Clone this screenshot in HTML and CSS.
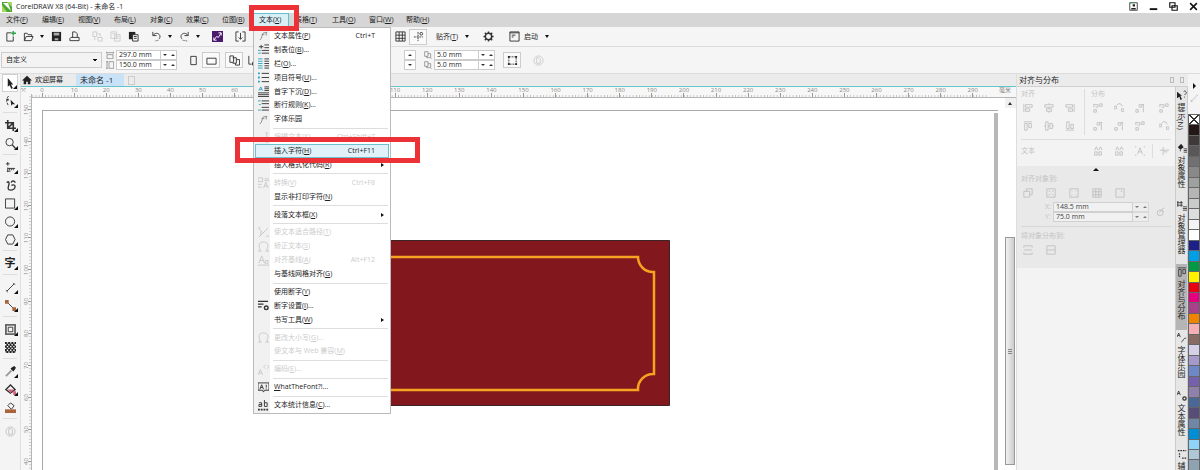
FILE: index.html
```html
<!DOCTYPE html>
<html lang="zh-CN">
<head>
<meta charset="utf-8">
<title>CorelDRAW X8 (64-Bit) - 未命名 -1</title>
<link rel="stylesheet" href="styles.css">
</head>
<body>
<svg class="defs" aria-hidden="true">
  <defs>
    <symbol id="new" viewBox="0 0 12 12"><path d="M7 2H2v9h7V6"/><path d="M9 0v5M7 2.500h5" class="green" stroke-width="1.500"/></symbol>
    <symbol id="open" viewBox="0 0 12 12"><path d="M1.500 10.500v-8h3l1 1.500h4v2M1.500 10.500l2-4.500h7.500l-2 4.500z"/></symbol>
    <symbol id="save" viewBox="0 0 12 12"><path d="M1 1h10v10H1z" class="solid"/><path d="M3 2h6v3H3zM4 8h4v2H4z" class="paper"/></symbol>
    <symbol id="print" viewBox="0 0 12 12"><path d="M4 7V1h3l2 2v4M2 7h9v3.500H1V8z"/></symbol>
    <symbol id="cut" viewBox="0 0 12 12"><path d="M1 1h4v5H1zM6 3h3v3M6 7h5v4H7zM3 7v3"/></symbol>
    <symbol id="copy" viewBox="0 0 12 12"><path d="M1 1h6v7H1zM5 4h6v7H5zM2.500 3h3M6.500 6h3M6.500 8h3"/></symbol>
    <symbol id="paste" viewBox="0 0 12 12"><path d="M1 1h7v8H1z" class="solid"/><path d="M5 4h6v7H5z" class="sheet"/><path d="M6.500 6h3M6.500 8h3"/></symbol>
    <symbol id="undo" viewBox="0 0 12 12"><path d="M2 1v4h4M2.500 4.500C6 0 12 4 9 8.500" /><path d="M8 10l-4 1" stroke-dasharray="1 1"/></symbol>
    <symbol id="redo" viewBox="0 0 12 12"><path d="M10 1v4H6M9.500 4.500C6 0 0 4 3 8.500"/><path d="M4 10l5 1" stroke-dasharray="1 1"/></symbol>
    <symbol id="connect" viewBox="0 0 12 12"><path d="M0 0h12v12H0z" class="purple"/><path d="M2 10l3-4 2 1 3-5M2 7v3h3M7 2h3v3" class="white-line"/></symbol>
    <symbol id="import" viewBox="0 0 12 12"><path d="M4 1H1v10h3M8 1h3v10H8M6 2v7M4 7l2 2 2-2"/></symbol>
    <symbol id="grid" viewBox="0 0 12 12"><path d="M1 1h10v10H1zM1 4.500h10M1 8h10M4.500 1v10M8 1v10"/></symbol>
    <symbol id="guides" viewBox="0 0 12 12"><path d="M5.500 1v10M1 6.500h10" stroke-dasharray="2 1"/><circle cx="9" cy="3" r="1.500"/></symbol>
    <symbol id="gear" viewBox="0 0 12 12"><circle cx="6" cy="6" r="3.500" stroke-width="1.600"/><path d="M6 .5v2M6 9.500v2M.5 6h2M9.500 6h2M2 2l1.500 1.500M8.500 8.500L10 10M10 2L8.500 3.500M3.500 8.500L2 10" stroke-width="1.600"/></symbol>
    <symbol id="launch" viewBox="0 0 12 12"><path d="M1 1h10v10H1zM1 2h10M3 4.500h4M3 6.500h2"/></symbol>
    <symbol id="portrait" viewBox="0 0 12 12"><path d="M3 1.500h6v9H3z"/></symbol>
    <symbol id="landscape" viewBox="0 0 12 12"><path d="M1 3.500h10v6.500H1z"/></symbol>
    <symbol id="pages" viewBox="0 0 12 12"><path d="M1 1h4v7H1zM4 3h4v6H4M8 5h3.500v6H7V9"/></symbol>
    <symbol id="page-one" viewBox="0 0 12 12"><path d="M2 1v9h3M6 8h3v3H6z"/></symbol>
    <symbol id="dup" viewBox="0 0 12 12"><path d="M1 1h5v7H1zM6 4h4v6H4V8M10 12h2"/></symbol>
    <symbol id="width" viewBox="0 0 12 12"><path d="M1 1v3M11 1v3M1 2.500h10M1.500 5.500h9v6h-9z"/></symbol>
    <symbol id="height" viewBox="0 0 12 12"><path d="M0 1h3M0 11h3M1.500 1v10M4.500 1h7v10h-7z"/></symbol>
    <symbol id="marquee" viewBox="0 0 12 12"><path d="M2 2h8v8H2z" stroke-dasharray="2 1"/><path d="M1 1h2v2H1zM9 1h2v2H9zM1 9h2v2H1zM9 9h2v2H9z" class="solid"/></symbol>
    <symbol id="round" viewBox="0 0 12 12"><circle cx="6" cy="6" r="5"/><path d="M4 3h3l1 1v5H4z"/></symbol>
    <symbol id="link" viewBox="0 0 12 12"><circle cx="5" cy="7" r="3.500"/><path d="M4 7l3-4 2 3M7 3l3-2"/></symbol>
    <symbol id="home" viewBox="0 0 12 12"><path d="M6 1l6 5.500h-2V11H7V8H5v3H2V6.500H0z" class="solid"/></symbol>
    <symbol id="pick" viewBox="0 0 12 12"><path d="M3 0l6 7H6.500l2 4-1.500 1-2-4L3 9.500z" class="solid"/></symbol>
    <symbol id="shape" viewBox="0 0 12 12"><path d="M4 0C1 3 1 6 4 11" stroke-dasharray="3 1"/><path d="M2 3h2v2H2zM6 4l5 5H8l-1 2z" class="solid"/></symbol>
    <symbol id="crop" viewBox="0 0 12 12"><path d="M3 0v9h9M0 3h9v9M3 9l6-6" stroke-width="1.800"/></symbol>
    <symbol id="zoom" viewBox="0 0 12 12"><circle cx="5" cy="4.500" r="4"/><path d="M8 7.500l3.500 4" stroke-width="1.500"/></symbol>
    <symbol id="freehand" viewBox="0 0 12 12"><path d="M3 0v4M1 2h4M3 6v5M3 7h8M5 7v2M7 7v2M9 7v2M2 10h4"/></symbol>
    <symbol id="artistic" viewBox="0 0 12 12"><path d="M2 3c2-3 3 0 2 3s-1 5 2 5 5-2 5-4-3-2-4-1M7 3c0-3 4-2 4 0" stroke-width="1.500"/></symbol>
    <symbol id="rect" viewBox="0 0 12 12"><path d="M.5 1h10v10H.5z"/></symbol>
    <symbol id="ellipse" viewBox="0 0 12 12"><circle cx="5.500" cy="6" r="5"/></symbol>
    <symbol id="polygon" viewBox="0 0 12 12"><path d="M3 1h5.500L11 6l-2.500 5H3L.5 6z"/></symbol>
    <symbol id="line" viewBox="0 0 12 12"><path d="M2 10l8-8M1 9l2 2M9 1l2 2"/></symbol>
    <symbol id="connector" viewBox="0 0 12 12"><path d="M2 2l8 8"/><path d="M0 0h4v4H0zM8 8h4v4H8z" class="brown"/></symbol>
    <symbol id="contour" viewBox="0 0 12 12"><path d="M1 1h10v10H1z" stroke="#666" stroke-width="2"/><path d="M3.500 3.500h5v5h-5z"/></symbol>
    <symbol id="checker" viewBox="0 0 12 12"><path d="M0 0h12v12H0z" class="solid"/><path d="M2 1h10M0 3h12M2 5h10M0 7h12M2 9h10M0 11h12" class="white-line" stroke-width="1.500" stroke-dasharray="1.500 2"/></symbol>
    <symbol id="dropper" viewBox="0 0 12 12"><path d="M1 11l6-6" stroke-width="2" stroke="#999"/><path d="M7 2l3-2 2 2-2 3-1 1-3-3z" class="solid"/></symbol>
    <symbol id="fill" viewBox="0 0 12 12"><path d="M1 6l5-5 5 5-5 4z" stroke-width="1.500"/><path d="M3 6h7l-4 4zM9 8h3v4H9z" class="rose"/></symbol>
    <symbol id="bucket" viewBox="0 0 12 12"><path d="M3 4l3-3 4 3-3 4z"/><path d="M0 8h12v4H0z" class="brown"/></symbol>
    <symbol id="font-p" viewBox="0 0 12 12"><path d="M2 11C5 9 4 4 6 3h4M4 5h3M9 2v4" stroke="#888"/></symbol>
    <symbol id="tabs" viewBox="0 0 12 12"><path d="M1 3h5M3.500 1v4M7 1h5M7 4h5M4 7h8M4 10h8"/><path d="M0 7h3M0 10h3" class="blue"/></symbol>
    <symbol id="columns" viewBox="0 0 12 12"><path d="M0 1h5M0 3.500h5M0 6h5M0 8.500h5M0 11h5" class="blue"/><path d="M7 1h5M7 3.500h5M7 6h5M7 8.500h5M7 11h5"/></symbol>
    <symbol id="bullets" viewBox="0 0 12 12"><path d="M0 1.500h2M0 6h2M0 10.500h2" class="blue" stroke-width="2"/><path d="M4 1.500h8M4 6h8M4 10.500h8"/></symbol>
    <symbol id="dropcap" viewBox="0 0 12 12"><path d="M1 5l2-4 2 4M2 4h2" class="blue"/><path d="M7 1h5M7 3h5M7 5h5M0 7.500h12M0 9.500h12M0 11.500h12"/></symbol>
    <symbol id="breaks" viewBox="0 0 12 12"><path d="M0 1h3M1 5h2M0 11h3" class="blue"/><path d="M4 1h8M4 4h8M4 8h8M4 11h8"/></symbol>
    <symbol id="edit" viewBox="0 0 12 12"><path d="M0 9h6M1 6h3M8 1h3M9.500 1v10M8 11h3"/></symbol>
    <symbol id="convert" viewBox="0 0 12 12"><path d="M0 1h5v4H0zM7 2h5M7 4h5M0 8h4M0 11h4M6 12l2.500-6L11 12M7 10h3"/></symbol>
    <symbol id="path" viewBox="0 0 12 12"><path d="M1 11L11 1M1 2l4 4M0 1h3M9 10h3M3 5v4"/></symbol>
    <symbol id="straight" viewBox="0 0 12 12"><path d="M2 8C-1 2 4 1 6 1s7 1 4 7M0 11h4M8 11h4M2 8v3M10 8v3"/></symbol>
    <symbol id="baseline" viewBox="0 0 12 12"><path d="M1 9l3-8 3 8M2 6h4M8 6h3v3H8zM0 11h12"/></symbol>
    <symbol id="hyphen" viewBox="0 0 12 12"><path d="M0 1.500h11M0 4.500h6M0 7.500h4" stroke-width="1.500"/><circle cx="9" cy="8.500" r="2" stroke-width="1.500"/></symbol>
    <symbol id="code" viewBox="0 0 12 12"><path d="M0 12l2.500-6L5 12M1 10h3M6 3l2-2M6 3l2 2M12 3l-2-2M12 3l-2 2"/></symbol>
    <symbol id="wtf" viewBox="0 0 12 12"><path d="M0 1h12v8H7l-1 2-1-2H0zM2 8l2-5 2 5M3 6h2M9 3v3M9 7v1"/></symbol>
    <symbol id="stats" viewBox="0 0 12 12"><path d="M1 3h3v4H1V5h3M7 0v7h3V3H7"/><path d="M0 10.500h12" stroke-dasharray="2 1" stroke-width="2"/></symbol>
    <symbol id="al" viewBox="0 0 12 12"><path d="M1 1v10M3 2h8v3H3zM3 7h5v3H3z"/></symbol>
    <symbol id="ac" viewBox="0 0 12 12"><path d="M1 2h10v3H1zM3 7h6v3H3zM6 0v2M6 5v2M6 10v2"/></symbol>
    <symbol id="ar" viewBox="0 0 12 12"><path d="M11 1v10M1 2h8v3H1zM4 7h5v3H4z"/></symbol>
    <symbol id="at" viewBox="0 0 12 12"><path d="M1 1h10M2 3h3v8H2zM7 3h3v5H7z"/></symbol>
    <symbol id="am" viewBox="0 0 12 12"><path d="M2 1h3v10H2zM7 3h3v6H7zM0 6h2M5 6h2M10 6h2"/></symbol>
    <symbol id="ab" viewBox="0 0 12 12"><path d="M1 11h10M2 1h3v8H2zM7 4h3v5H7z"/></symbol>
    <symbol id="d1" viewBox="0 0 12 12"><path d="M1 1v4M1 2h5v3H3M8 1h3v3H8zM1 8h3v3H1z"/></symbol>
    <symbol id="d2" viewBox="0 0 12 12"><path d="M0 4h3v3H0zM5 1h3M9 7h3v3H9zM3 3l2-2M8 1l2 3"/></symbol>
    <symbol id="d3" viewBox="0 0 12 12"><path d="M5 2h3v3H5zM10 1v10M1 8h3v3H1zM8 2h3"/></symbol>
    <symbol id="text-al" viewBox="0 0 12 12"><path d="M2 5l2-4 2 4M7 5l2-4 2 4M2 7h3v4H2zM7 7h3v4H7z"/></symbol>
    <symbol id="text-box" viewBox="0 0 12 12"><path d="M3 10l3-8 3 8M4 7h4M0 2V0h2M10 0h2v2M0 10v2h2M10 12h2v-2"/></symbol>
    <symbol id="origin" viewBox="0 0 12 12"><path d="M1 5h11M5 1v10M6 7h4"/></symbol>
    <symbol id="active" viewBox="0 0 12 12"><path d="M1 4h7v7H1zM4 4V1h7v7H8"/></symbol>
    <symbol id="edge" viewBox="0 0 12 12"><path d="M1 1h10v10H1z"/><path d="M3 3l2 2M9 3L7 5M3 9l2-2M9 9L7 7"/></symbol>
    <symbol id="center" viewBox="0 0 12 12"><path d="M1 1h10v10H1zM3 3l1 1M9 3L8 4M3 9l1-1M9 9L8 8"/></symbol>
    <symbol id="point" viewBox="0 0 12 12"><path d="M1 1h10v10H1zM7 4h2"/></symbol>
    <symbol id="page-h" viewBox="0 0 12 12"><path d="M1 1h10M1 6h10M1 1v2M11 1v2M1 9v2h10V9"/></symbol>
    <symbol id="page-f" viewBox="0 0 12 12"><path d="M1 1h10v10H1zM1 6h10"/></symbol>
    <symbol id="user" viewBox="0 0 12 12"><path d="M1 1h10v10H1z"/><path d="M5 3h3v3H5zM3 8h6v2H3z" class="solid"/><path d="M1 1h5" class="green"/></symbol>
    <symbol id="min" viewBox="0 0 12 12"><path d="M1 9.500h10" stroke-width="2.500"/></symbol>
    <symbol id="restore" viewBox="0 0 12 12"><path d="M1 1h7v6H1zM4 5h7v6H4z" stroke-width="1.500"/></symbol>
    <symbol id="close" viewBox="0 0 12 12"><path d="M1.500 1.500l9 9M10.500 1.500l-9 9" stroke-width="2"/></symbol>
    <symbol id="hint" viewBox="0 0 12 12"><path d="M0 2l6 5H4l2 4-2 1-1-4-3 2z" class="solid"/><path d="M8 2c1-2 4 0 3 2L9 6M9 8v1"/></symbol>
    <symbol id="props" viewBox="0 0 12 12"><path d="M1 5l4-4 3 4-4 3z" class="solid"/><path d="M8 7h4M8 9h4M8 11h4M4 8v2"/></symbol>
    <symbol id="manager" viewBox="0 0 12 12"><path d="M1 0v7M5 0v7M0 2h7M0 5h7" /><path d="M7 7h5M7 9h5M7 11h5"/></symbol>
    <symbol id="fontset" viewBox="0 0 12 12"><path d="M0 5l2-5 2 5M1 3h2M5 11c3-1 2-5 6-5"/></symbol>
    <symbol id="textset" viewBox="0 0 12 12"><path d="M0 5l2-5 2 5M1 3h2"/><circle cx="9" cy="9" r="2" stroke-width="1.500"/></symbol>
    <symbol id="guideset" viewBox="0 0 12 12"><path d="M1 2h10M3 5v6M6 11h6" stroke-dasharray="2 1" stroke-width="1.500"/></symbol>
    <symbol id="pen" viewBox="0 0 12 12"><path d="M1 11l8-8M9 1l2 2M1 9v2h2"/></symbol>
  </defs>
</svg>

<div class="app">
  <header class="titlebar">
    <svg class="logo" viewBox="0 0 10 10"><path d="M0 0h10v10H0z" fill="#4ba82e"/><path d="M0 3l5 7H0zM5 0h5v5z" fill="#a8d56a"/><path d="M1 1l8 8-3-8z" fill="#fff"/></svg>
    <h1 class="title">CorelDRAW X8 (64-Bit) - 未命名 -1</h1>
    <div class="window-buttons">
      <button class="win" aria-label="账户"><svg class="i"><use href="#user"/></svg></button>
      <button class="win" aria-label="最小化"><svg class="i"><use href="#min"/></svg></button>
      <button class="win" aria-label="还原"><svg class="i"><use href="#restore"/></svg></button>
      <button class="win" aria-label="关闭"><svg class="i"><use href="#close"/></svg></button>
    </div>
  </header>

  <nav class="menubar">
    <button class="menu">文件(<u>F</u>)</button>
    <button class="menu">编辑(<u>E</u>)</button>
    <button class="menu">视图(<u>V</u>)</button>
    <button class="menu">布局(<u>L</u>)</button>
    <button class="menu">对象(<u>C</u>)</button>
    <button class="menu">效果(<u>C</u>)</button>
    <button class="menu">位图(<u>B</u>)</button>
    <div class="menu-open">
      <button class="menu menu-active" aria-expanded="true">文本(<u>X</u>)</button>
      <ul class="dropdown">
        <li class="row"><button class="item"><svg class="i"><use href="#font-p"/></svg><span>文本属性(<u>P</u>)</span><kbd>Ctrl+T</kbd></button></li>
        <li class="row"><button class="item"><svg class="i"><use href="#tabs"/></svg><span>制表位(<u>B</u>)...</span></button></li>
        <li class="row"><button class="item"><svg class="i"><use href="#columns"/></svg><span>栏(<u>O</u>)...</span></button></li>
        <li class="row"><button class="item"><svg class="i"><use href="#bullets"/></svg><span>项目符号(<u>U</u>)...</span></button></li>
        <li class="row"><button class="item"><svg class="i"><use href="#dropcap"/></svg><span>首字下沉(<u>D</u>)...</span></button></li>
        <li class="row"><button class="item"><svg class="i"><use href="#breaks"/></svg><span>断行规则(<u>K</u>)...</span></button></li>
        <li class="row"><button class="item"><svg class="i"><use href="#font-p"/></svg><span>字体乐园</span></button></li>
        <li class="rule"></li>
        <li class="row"><button class="item" disabled><svg class="i"><use href="#edit"/></svg><span>编辑文本(<u>X</u>)...</span><kbd>Ctrl+Shift+T</kbd></button></li>
        <li class="row"><button class="item item-hot"><span>插入字符(<u>H</u>)</span><kbd>Ctrl+F11</kbd></button></li>
        <li class="row"><button class="item item-sub"><span>插入格式化代码(<u>R</u>)</span></button></li>
        <li class="rule"></li>
        <li class="row"><button class="item" disabled><svg class="i"><use href="#convert"/></svg><span>转换(<u>V</u>)</span><kbd>Ctrl+F8</kbd></button></li>
        <li class="row"><button class="item"><span>显示非打印字符(<u>N</u>)</span></button></li>
        <li class="rule"></li>
        <li class="row"><button class="item item-sub"><span>段落文本框(<u>X</u>)</span></button></li>
        <li class="rule"></li>
        <li class="row"><button class="item" disabled><svg class="i"><use href="#path"/></svg><span>使文本适合路径(<u>T</u>)</span></button></li>
        <li class="row"><button class="item" disabled><svg class="i"><use href="#straight"/></svg><span>矫正文本(<u>S</u>)</span></button></li>
        <li class="row"><button class="item" disabled><svg class="i"><use href="#baseline"/></svg><span>对齐基线(<u>A</u>)</span><kbd>Alt+F12</kbd></button></li>
        <li class="row"><button class="item"><span>与基线网格对齐(<u>G</u>)</span></button></li>
        <li class="rule"></li>
        <li class="row"><button class="item"><span>使用断字(<u>Y</u>)</span></button></li>
        <li class="row"><button class="item"><svg class="i"><use href="#hyphen"/></svg><span>断字设置(<u>I</u>)...</span></button></li>
        <li class="row"><button class="item item-sub"><span>书写工具(<u>W</u>)</span></button></li>
        <li class="rule"></li>
        <li class="row"><button class="item" disabled><svg class="i"><use href="#straight"/></svg><span>更改大小写(<u>G</u>)...</span></button></li>
        <li class="row"><button class="item" disabled><span>使文本与 Web 兼容(<u>M</u>)</span></button></li>
        <li class="rule"></li>
        <li class="row"><button class="item" disabled><svg class="i"><use href="#code"/></svg><span>编码(<u>E</u>)...</span></button></li>
        <li class="rule"></li>
        <li class="row"><button class="item"><svg class="i"><use href="#wtf"/></svg><span><u>W</u>hatTheFont?!...</span></button></li>
        <li class="rule"></li>
        <li class="row"><button class="item"><svg class="i"><use href="#stats"/></svg><span>文本统计信息(<u>C</u>)...</span></button></li>
      </ul>
    </div>
    <button class="menu menu-wide">表格(<u>T</u>)</button>
    <button class="menu menu-wide">工具(<u>O</u>)</button>
    <button class="menu menu-wide">窗口(<u>W</u>)</button>
    <button class="menu menu-wide">帮助(<u>H</u>)</button>
  </nav>

  <div class="toolbar">
    <div class="group">
      <button class="tool" aria-label="新建"><svg class="i"><use href="#new"/></svg></button>
      <button class="tool" aria-label="打开"><svg class="i"><use href="#open"/></svg></button>
      <button class="caret" aria-label="最近文件"></button>
      <button class="tool" aria-label="保存"><svg class="i"><use href="#save"/></svg></button>
      <button class="tool" aria-label="打印"><svg class="i"><use href="#print"/></svg></button>
    </div>
    <div class="group">
      <button class="tool" aria-label="剪切" disabled><svg class="i"><use href="#cut"/></svg></button>
      <button class="tool" aria-label="复制" disabled><svg class="i"><use href="#copy"/></svg></button>
      <button class="tool" aria-label="粘贴"><svg class="i"><use href="#paste"/></svg></button>
    </div>
    <div class="group">
      <button class="tool" aria-label="撤消"><svg class="i"><use href="#undo"/></svg></button>
      <button class="caret" aria-label="撤消列表"></button>
      <button class="tool" aria-label="重做"><svg class="i"><use href="#redo"/></svg></button>
      <button class="caret" aria-label="重做列表"></button>
    </div>
    <div class="group">
      <button class="tool" aria-label="搜索内容"><svg class="i"><use href="#connect"/></svg></button>
    </div>
    <div class="group group-view">
      <button class="tool" aria-label="导入"><svg class="i"><use href="#import"/></svg></button>
    </div>
    <div class="group">
      <button class="tool" aria-label="网格"><svg class="i"><use href="#grid"/></svg></button>
      <button class="tool tool-on" aria-label="辅助线"><svg class="i"><use href="#guides"/></svg></button>
    </div>
    <div class="group">
      <button class="text-tool">贴齐(<u>T</u>)</button>
      <button class="caret" aria-label="贴齐选项"></button>
    </div>
    <div class="group group-gear">
      <button class="tool" aria-label="选项"><svg class="i"><use href="#gear"/></svg></button>
    </div>
    <div class="group">
      <button class="tool" aria-label="应用程序启动器"><svg class="i"><use href="#launch"/></svg></button>
      <button class="text-tool text-launch">启动</button>
      <button class="caret" aria-label="启动列表"></button>
    </div>
  </div>

  <div class="toolbar propbar">
    <select class="preset" aria-label="页面大小"><option>自定义</option></select>
    <div class="fields">
      <label class="field"><svg class="i mini"><use href="#width"/></svg><input class="num" value="297.0 mm" aria-label="页面宽度"><button class="step" aria-label="减小"></button><button class="step step-up" aria-label="增大"></button></label>
      <label class="field"><svg class="i mini"><use href="#height"/></svg><input class="num" value="150.0 mm" aria-label="页面高度"><button class="step" aria-label="减小"></button><button class="step step-up" aria-label="增大"></button></label>
    </div>
    <div class="group group-page">
      <button class="tool" aria-label="纵向"><svg class="i"><use href="#portrait"/></svg></button>
      <button class="tool tool-on" aria-label="横向"><svg class="i"><use href="#landscape"/></svg></button>
    </div>
    <div class="group group-pages">
      <button class="tool tool-on" aria-label="所有页面"><svg class="i"><use href="#pages"/></svg></button>
      <button class="tool" aria-label="当前页"><svg class="i"><use href="#page-one"/></svg></button>
    </div>
    <div class="nudge"><button class="step step-up" aria-label="增大微调"></button><button class="step" aria-label="减小微调"></button></div>
    <div class="fields fields-dup">
      <label class="field"><svg class="i mini"><use href="#dup"/></svg><input class="num" value="5.0 mm" aria-label="再制 X"><button class="step" aria-label="减小"></button><button class="step step-up" aria-label="增大"></button></label>
      <label class="field"><svg class="i mini"><use href="#dup"/></svg><input class="num" value="5.0 mm" aria-label="再制 Y"><button class="step" aria-label="减小"></button><button class="step step-up" aria-label="增大"></button></label>
    </div>
    <div class="group group-end">
      <button class="tool tool-on" aria-label="视为已填充"><svg class="i"><use href="#marquee"/></svg></button>
      <button class="tool" aria-label="快速自定义" disabled><svg class="i"><use href="#round"/></svg></button>
    </div>
  </div>

  <div class="body">
    <aside class="toolbox">
      <button class="pen pen-on" aria-label="选择"><svg class="i"><use href="#pick"/></svg></button>
      <button class="pen" aria-label="形状"><svg class="i"><use href="#shape"/></svg></button>
      <hr class="split">
      <button class="pen" aria-label="裁剪"><svg class="i"><use href="#crop"/></svg></button>
      <button class="pen" aria-label="缩放"><svg class="i"><use href="#zoom"/></svg></button>
      <hr class="split">
      <button class="pen" aria-label="手绘"><svg class="i"><use href="#freehand"/></svg></button>
      <button class="pen pen-flat" aria-label="艺术笔"><svg class="i"><use href="#artistic"/></svg></button>
      <button class="pen" aria-label="矩形"><svg class="i"><use href="#rect"/></svg></button>
      <button class="pen" aria-label="椭圆形"><svg class="i"><use href="#ellipse"/></svg></button>
      <button class="pen" aria-label="多边形"><svg class="i"><use href="#polygon"/></svg></button>
      <hr class="split">
      <button class="pen pen-text">字</button>
      <hr class="split">
      <button class="pen" aria-label="平行度量"><svg class="i"><use href="#line"/></svg></button>
      <button class="pen" aria-label="连接器"><svg class="i"><use href="#connector"/></svg></button>
      <hr class="split">
      <button class="pen" aria-label="轮廓图"><svg class="i"><use href="#contour"/></svg></button>
      <button class="pen pen-flat" aria-label="透明度"><svg class="i"><use href="#checker"/></svg></button>
      <hr class="split">
      <button class="pen" aria-label="滴管"><svg class="i"><use href="#dropper"/></svg></button>
      <button class="pen" aria-label="交互式填充"><svg class="i"><use href="#fill"/></svg></button>
      <button class="pen pen-flat" aria-label="智能填充"><svg class="i"><use href="#bucket"/></svg></button>
      <hr class="split">
      <button class="pen pen-flat" aria-label="快速自定义" disabled><svg class="i"><use href="#round"/></svg></button>
    </aside>

    <main class="workspace">
      <div class="tabs">
        <button class="tab"><svg class="i"><use href="#home"/></svg>欢迎屏幕</button>
        <button class="tab tab-on">未命名 -1</button>
        <button class="tab-new" aria-label="新建文档"></button>
      </div>
      <div class="ruler">
        <span class="corner">⤧</span>
        <ol class="marks">
          <li>0</li><li>10</li><li>20</li><li>30</li><li>40</li><li>50</li><li>60</li><li>70</li><li>80</li><li>90</li><li>100</li><li>110</li><li>120</li><li>130</li><li>140</li><li>150</li><li>160</li><li>170</li><li>180</li><li>190</li><li>200</li><li>210</li><li>220</li><li>230</li><li>240</li><li>250</li><li>260</li><li>270</li><li>280</li><li>290</li>
        </ol>
        <span class="unit">毫米</span>
      </div>
      <div class="stage">
        <ol class="vmarks">
          <li>150</li><li>140</li><li>130</li><li>120</li><li>110</li><li>100</li><li>90</li><li>80</li><li>70</li><li>60</li><li>50</li><li>40</li>
        </ol>
        <div class="canvas">
          <div class="sheet-page">
            <svg class="art" viewBox="0 0 334 166"><path d="M.5.5h333v165H.5z" fill="#82181d" stroke="#3a2426"/><path d="M32 17H302A15 15 0 0 0 318 32V134A15 15 0 0 0 302 150H32A15 15 0 0 0 16 134V32A15 15 0 0 0 32 17z" fill="none" stroke="#f5a321" stroke-width="2.500"/></svg>
          </div>
        </div>
        <div class="scroll">
          <button class="scroll-up" aria-label="向上滚动"></button>
          <div class="thumb"></div>
        </div>
      </div>
    </main>

    <div class="side">
      <header class="side-head"><h2 class="side-title">对齐与分布</h2><button class="sq" aria-label="折叠"></button><button class="sq" aria-label="关闭泊坞窗"></button></header>
      <div class="side-body">
        <section class="docker">
          <div class="pair">
            <div class="cell">
              <h3 class="cap">对齐</h3>
              <div class="icons"><svg class="i"><use href="#al"/></svg><svg class="i"><use href="#ac"/></svg><svg class="i"><use href="#ar"/></svg></div>
              <div class="icons"><svg class="i"><use href="#at"/></svg><svg class="i"><use href="#am"/></svg><svg class="i"><use href="#ab"/></svg></div>
            </div>
            <div class="cell cell-wide">
              <h3 class="cap">分布</h3>
              <div class="icons"><svg class="i"><use href="#d1"/></svg><svg class="i"><use href="#d2"/></svg><svg class="i"><use href="#d3"/></svg><svg class="i last"><use href="#d1"/></svg></div>
              <div class="icons"><svg class="i"><use href="#d3"/></svg><svg class="i"><use href="#d3"/></svg><svg class="i"><use href="#d1"/></svg><svg class="i last"><use href="#d2"/></svg></div>
            </div>
          </div>
          <div class="pair pair-text">
            <h3 class="cap cell">文本</h3>
            <div class="icons cell-wide"><svg class="i"><use href="#text-al"/></svg><svg class="i"><use href="#text-al"/></svg><svg class="i"><use href="#text-box"/></svg><span class="bar"></span><svg class="i last"><use href="#origin"/></svg></div>
          </div>
          <div class="more">
            <button class="fold" aria-label="收起"></button>
            <h3 class="cap">对齐对象到:</h3>
            <div class="icons targets"><svg class="i"><use href="#active"/></svg><svg class="i"><use href="#edge"/></svg><svg class="i"><use href="#center"/></svg><svg class="i"><use href="#grid"/></svg><svg class="i"><use href="#point"/></svg></div>
            <div class="coords">
              <div class="fields fields-xy">
                <label class="field"><span class="axis">X:</span><input class="num" value="148.5 mm"><button class="step" aria-label="减小"></button><button class="step step-up" aria-label="增大"></button></label>
                <label class="field"><span class="axis">Y:</span><input class="num" value="75.0 mm"><button class="step" aria-label="减小"></button><button class="step step-up" aria-label="增大"></button></label>
              </div>
              <svg class="i"><use href="#link"/></svg>
            </div>
            <h3 class="cap cap-line">将对象分布到:</h3>
            <div class="icons targets"><svg class="i"><use href="#page-h"/></svg><svg class="i"><use href="#page-f"/></svg></div>
          </div>
        </section>
        <nav class="docks">
          <button class="dock"><svg class="i"><use href="#hint"/></svg>提示(N)</button>
          <button class="dock"><svg class="i"><use href="#props"/></svg>对象属性</button>
          <button class="dock"><svg class="i"><use href="#manager"/></svg>对象管理器</button>
          <button class="dock dock-on"><svg class="i"><use href="#at"/></svg>对齐与分布</button>
          <button class="dock"><svg class="i"><use href="#fontset"/></svg>字体乐园</button>
          <button class="dock"><svg class="i"><use href="#textset"/></svg>文本属性</button>
          <button class="dock"><svg class="i"><use href="#guideset"/></svg>辅助</button>
        </nav>
      </div>
    </div>

    <div class="palette">
      <button class="flyout" aria-label="调色板选项"></button>
      <svg class="i picker"><use href="#pen"/></svg>
      <div class="swatches">
        <i class="sw sw-none"></i><i class="sw" style="background:#231815"></i><i class="sw" style="background:#3e3a39"></i><i class="sw" style="background:#595757"></i><i class="sw" style="background:#727171"></i><i class="sw" style="background:#898989"></i><i class="sw" style="background:#9fa0a0"></i><i class="sw" style="background:#b5b5b6"></i><i class="sw" style="background:#c9caca"></i><i class="sw" style="background:#dcdddd"></i><i class="sw" style="background:#f4f4f4"></i><i class="sw" style="background:#fff"></i><i class="sw" style="background:#1d2088"></i><i class="sw" style="background:#00a0e9"></i><i class="sw" style="background:#009944"></i><i class="sw" style="background:#fff100"></i><i class="sw" style="background:#e60012"></i><i class="sw" style="background:#e4007f"></i><i class="sw" style="background:#a9408c"></i><i class="sw" style="background:#f08300"></i><i class="sw" style="background:#f4b0b2"></i><i class="sw" style="background:#886c64"></i><i class="sw" style="background:#d5cfe8"></i><i class="sw" style="background:#a59aca"></i><i class="sw" style="background:#6d87c8"></i><i class="sw" style="background:#7560ae"></i><i class="sw" style="background:#8f80ac"></i><i class="sw" style="background:#4a679a"></i><i class="sw" style="background:#574d78"></i><i class="sw" style="background:#7086a6"></i><i class="sw" style="background:#008fd6"></i><i class="sw" style="background:#8fd4f8"></i><i class="sw" style="background:#b0c8d6"></i><i class="sw" style="background:#8fa2b2"></i>
      </div>
    </div>
  </div>

  <div class="callout callout-menu"></div>
  <div class="callout callout-item"></div>
</div>
</body>
</html>
```

FILE: styles.css
```css
* { box-sizing: border-box; }

body {
  margin: 0;
  font: 7px/10px "Open Sans", "Noto Sans CJK SC", sans-serif;
  color: #222;
  background: #f4f4f4;
}

button, input, select {
  margin: 0;
  padding: 0;
  border: 0;
  border-radius: 0;
  background: none;
  color: inherit;
  font: inherit;
  text-align: left;
  appearance: none;
}

h1, h2, h3 { margin: 0; font-size: inherit; font-weight: 400; }
ul, ol { margin: 0; padding: 0; list-style: none; }
kbd { font: inherit; }
u { text-underline-offset: 1px; }

.defs { position: absolute; width: 0; height: 0; }

.i {
  flex: none;
  display: block;
  width: 11px;
  height: 11px;
  fill: none;
  stroke: #333;
  stroke-width: 1;
}
.mini { width: 8px; height: 8px; stroke: #777; }
.solid { fill: #222; stroke: none; }
.paper { fill: #aaa; stroke: none; }
.sheet { fill: #f4f4f4; }
.purple { fill: #4c1a6c; stroke: none; }
.brown { fill: #a8643c; stroke: none; }
.rose { fill: #d0607c; stroke: none; }
.green { stroke: #27a844; }
.blue { stroke: #27a3c4; }
.white-line { stroke: #fff; }

.app {
  position: relative;
  display: flex;
  flex-direction: column;
  height: 100vh;
  overflow: hidden;
}

/* Title bar */
.titlebar {
  flex: none;
  display: flex;
  align-items: center;
  gap: 4px;
  height: 13px;
  padding: 0 2px;
  background: #fff;
}
.logo { width: 10px; height: 10px; }
.title { flex: 1; white-space: nowrap; }
.window-buttons { display: flex; align-items: center; gap: 11px; }
.win { width: 9px; }
.win .i { width: 9px; height: 9px; stroke: #111; }

/* Menu bar */
.menubar {
  flex: none;
  display: flex;
  height: 14px;
  padding-left: 1px;
  background: #d6d6d6;
}
.menu { width: 36px; height: 14px; padding: 0 5px; white-space: nowrap; }
.menu-wide { width: 37px; padding: 0 6px; }
.menu-open { position: relative; z-index: 2; }
.menu-active {
  padding: 0 5px;
  border: 1px solid #63bfd0;
  background: #d8eff6;
}
.dropdown {
  position: absolute;
  top: 14px;
  left: 0;
  display: flex;
  flex-direction: column;
  width: 138px;
  height: 387px;
  padding: 1px;
  border: 1px solid #bbb;
  background: linear-gradient(90deg, #f1f1f1 16px, #fff 16px);
}
.row { flex: 0 1 14px; min-height: 0; display: flex; }
.item {
  flex: 1;
  display: grid;
  grid-template-columns: 12px 1fr auto;
  align-items: center;
  column-gap: 4px;
  padding: 0 13px 0 2px;
  border: 1px solid transparent;
  line-height: 10px;
  white-space: nowrap;
}
.item span { grid-column: 2; grid-row: 1; }
.item kbd { grid-column: 3; grid-row: 1; }
.item .i { grid-column: 1; grid-row: 1; }
.item:disabled { color: #ccc; }
.item:disabled .i { stroke: #c8c8c8; }
.item-hot { border-color: #6cc0cf; background: #e0f1f9; }
.item-sub { padding-right: 4px; }
.item-sub::after {
  content: "";
  grid-column: 3;
  border: 2px solid transparent;
  border-left: 3px solid #111;
  border-right: 0;
}
.rule {
  flex: 0 1 4px;
  margin: 0 1px 0 18px;
  background: linear-gradient(#ddd, #ddd) 0 50% / 100% 1px no-repeat;
}

/* Toolbars */
.toolbar {
  flex: none;
  display: flex;
  align-items: center;
  gap: 5px;
  height: 20px;
  padding-left: 1px;
  border-bottom: 1px solid #dcdcdc;
  background: #f5f5f5;
}
.group { display: flex; align-items: center; }
.tool {
  display: grid;
  place-items: center;
  width: 18px;
  height: 16px;
}
.tool:disabled .i { stroke: #ccc; }
.tool-on { border: 1px solid #ccc; background: #fafafa; }
.caret { display: grid; place-items: center; width: 10px; height: 10px; }
.caret::before {
  content: "";
  border: 2px solid transparent;
  border-top: 3px solid #111;
  border-bottom: 0;
}
.group-view { width: 155px; }
.group-gear { margin: 0 3px 0 2px; }
.text-tool { padding: 0 4px; white-space: nowrap; }
.text-launch { padding: 0 4px 0 1px; }

.propbar { height: 27px; gap: 4px; }
.preset {
  width: 101px;
  height: 16px;
  padding-left: 4px;
  border: 1px solid #ccc;
  background:
    linear-gradient(135deg, #111 2px, transparent 2px) 93px 6px / 3px 3px no-repeat,
    linear-gradient(225deg, #111 2px, transparent 2px) 90px 6px / 3px 3px no-repeat,
    #f3f3f3;
}
.fields { width: 71px; }
.field { display: flex; align-items: center; height: 10px; }
.field .mini { margin-right: 2px; }
.num {
  flex: 1;
  width: 0;
  height: 10px;
  padding-left: 2px;
  border: 1px solid #ccc;
  background: #fff;
}
.step {
  display: grid;
  place-items: center;
  width: 8px;
  height: 10px;
  border: solid #ccc;
  border-width: 1px 0;
  background: #fff;
}
.step-up { border-right-width: 1px; }
.step::before {
  content: "";
  border: 2px solid transparent;
  border-top-color: #333;
  border-bottom: 0;
}
.step-up::before { border: 2px solid transparent; border-bottom-color: #333; border-top: 0; }
.group-page { margin-left: 3px; }
.group-pages { margin-left: 1px; }
.nudge { display: flex; flex-direction: column; margin-left: 139px; }
.nudge .step { width: 12px; border-width: 1px; }
.fields-dup { margin-left: 4px; }
.group-end { gap: 8px; margin-left: 4px; }

/* Main area */
.body { flex: 1; display: flex; min-height: 0; }

.toolbox {
  flex: none;
  display: flex;
  flex-direction: column;
  align-items: center;
  width: 21px;
  border-right: 1px solid #e0e0e0;
}
.pen {
  position: relative;
  flex: none;
  display: grid;
  place-items: center;
  width: 16px;
  height: 18px;
}
.pen::after {
  content: "";
  position: absolute;
  right: 0;
  bottom: 2px;
  border: 2px solid transparent;
  border-right-color: #111;
  border-bottom-color: #111;
}
.pen-flat::after { display: none; }
.pen-on { border: 1px solid #d0d0d0; background: #fff; }
.pen-text { font-size: 11px; font-weight: 700; }
.pen:disabled .i { stroke: #c4c4c4; }
.split { flex: none; width: 14px; height: 1px; margin: 2px 0 3px; border: 0; background: #ddd; }

.workspace {
  flex: 1;
  display: flex;
  flex-direction: column;
  min-width: 0;
  border-right: 1px solid #ddd;
}
.tabs {
  flex: none;
  display: flex;
  align-items: center;
  height: 13px;
  border-bottom: 1px solid #67c3cc;
  background: #ebebeb;
}
.tab {
  display: flex;
  align-items: center;
  gap: 3px;
  height: 12px;
  padding: 0 13px 0 1px;
  white-space: nowrap;
}
.tab .i { width: 10px; height: 10px; }
.tab-on { padding: 0 11px 0 4px; background: #c8e2f8; font-size: 8px; }
.tab-new { width: 7px; height: 9px; margin-left: 4px; border: 1px solid #ccc; }

.ruler {
  flex: none;
  display: flex;
  height: 11px;
  border-bottom: 1px solid #b5b5b5;
  background: #f7f7f7;
  color: #888;
  font-size: 6px;
  line-height: 7px;
}
.corner { width: 5px; }
.marks { flex: 1; display: flex; }
.marks li {
  flex: 1 1 0;
  text-align: center;
  background:
    linear-gradient(#999, #999) 50% 100% / 1px 4px no-repeat,
    linear-gradient(90deg, #c0c0c0 1px, transparent 1px) 0 100% / 10% 2px repeat-x;
}
.unit { width: 27px; padding-left: 10px; }

.stage { flex: 1; display: flex; min-height: 0; }
.vmarks {
  flex: none;
  width: 11px;
  overflow: hidden;
  margin-top: -4px;
  border-right: 1px solid #b5b5b5;
  background: #f7f7f7;
  color: #888;
  font-size: 6px;
  line-height: 7px;
}
.vmarks li {
  width: 10px;
  height: 32px;
  padding-right: 2px;
  writing-mode: vertical-rl;
  transform: rotate(180deg);
  text-align: center;
  background:
    linear-gradient(#999, #999) 0 50% / 3px 1px no-repeat,
    linear-gradient(#c0c0c0 1px, transparent 1px) 0 0 / 2px 10% repeat-y;
}
.canvas { flex: 1; overflow: hidden; padding: 12px 6px 0 10px; background: #fff; }
.sheet-page {
  height: 100%;
  display: grid;
  justify-items: center;
  align-items: start;
  padding: 129px 35px 0 0;
  border: solid #a8a8a8;
  border-width: 1px 0 0 1px;
  background:
    linear-gradient(#b8b8b8, #b8b8b8) 100% 2px / 4px 100% no-repeat,
    #fff;
}
.art { width: 334px; height: 166px; }
.scroll {
  display: flex;
  flex-direction: column;
  align-items: center;
  width: 12px;
  background: #fff;
}
.scroll-up {
  display: grid;
  place-items: center;
  width: 11px;
  height: 10px;
  background: #f0f0f0;
}
.scroll-up::before {
  content: "";
  border: 2px solid transparent;
  border-top: 0;
  border-bottom: 3px solid #333;
}
.thumb {
  flex: 1;
  width: 10px;
  margin: 129px 0 5px;
  border: 1px solid #999;
  background:
    repeating-linear-gradient(#888 0 1px, transparent 1px 2px) 50% 50% / 4px 5px no-repeat,
    linear-gradient(90deg, #f2f2f2, #ccc);
}

/* Docker */
.side {
  flex: none;
  display: flex;
  flex-direction: column;
  width: 171px;
  background: #f3f3f3;
}
.side-head {
  flex: none;
  display: flex;
  align-items: center;
  gap: 6px;
  height: 13px;
  padding: 0 4px 0 2px;
  border-bottom: 1px solid #d0d0d0;
  background: #ebebeb;
}
.side-title { flex: 1; font-size: 8px; }
.sq { width: 4px; height: 6px; border: 1px solid #bbb; }
.side-body { flex: 1; display: flex; min-height: 0; }
.docker { flex: 1; color: #c4c4c4; }
.docker .i { stroke: #bdbdbd; width: 10px; height: 10px; }
.pair { display: flex; margin: 0 4px; padding: 2px 0 4px; border-bottom: 1px solid #ddd; }
.cell { flex: none; width: 63px; }
.cell-wide { flex: 1; padding-left: 6px; }
.pair .cell + .cell-wide { border-left: 1px solid #ddd; }
.pair-text { align-items: center; padding: 2px 0 4px; border: 0; }
.pair-text .cell + .cell-wide { border: 0; padding-left: 9px; }
.icons { display: flex; align-items: center; gap: 11px; height: 18px; padding-left: 2px; }
.bar { flex: none; width: 1px; height: 14px; margin-left: -4px; background: #ddd; }
.last { margin-left: auto; margin-right: 2px; }
.bar + .last { margin-left: -5px; }
.more { height: 102px; margin-top: 2px; padding: 2px 4px 0; background: #e9e9e9; }
.fold { display: block; margin: 0 auto 3px; }
.fold::before {
  content: "";
  display: block;
  border: 3px solid transparent;
  border-top: 0;
  border-bottom-color: #111;
}
.targets { gap: 13px; }
.coords { display: flex; align-items: center; justify-content: space-between; padding: 0 5px 4px 24px; border-bottom: 1px solid #d8d8d8; }
.fields-xy { width: 104px; }
.axis { width: 8px; }
.fields-xy .num { background: #f1f1f1; color: #444; border-color: #d0d0d0; }
.fields-xy .step { background: #f1f1f1; border-color: #d0d0d0; opacity: 0.6; }
.cap-line { padding-top: 4px; }

.docks {
  flex: none;
  width: 13px;
  overflow: hidden;
  border: solid #ccc;
  border-width: 0 1px;
  background: #e6e6e6;
}
.dock {
  display: flex;
  align-items: center;
  gap: 3px;
  width: 11px;
  padding: 3px 0 10px;
  font-size: 8px;
  line-height: 11px;
  writing-mode: vertical-rl;
  white-space: nowrap;
}
.dock .i { width: 10px; height: 10px; }
.dock-on { background: #b5b5b5; }

/* Colour palette */
.palette {
  flex: none;
  display: flex;
  flex-direction: column;
  align-items: center;
  width: 12px;
}
.flyout { height: 20px; padding-top: 4px; }
.flyout::before {
  content: "";
  display: block;
  border: 3px solid transparent;
  border-left-color: #111;
  border-right: 0;
}
.picker { height: 8px; margin-bottom: 12px; stroke: #aaa; }
.swatches { flex: 1; display: flex; flex-direction: column; width: 12px; min-height: 0; }
.sw { flex: 1 1 0; border: solid #666; border-width: 1px 1px 0; }
.sw-none {
  background:
    linear-gradient(45deg, transparent 46%, #333 46% 54%, transparent 54%),
    linear-gradient(135deg, transparent 46%, #333 46% 54%, transparent 54%),
    #fff;
}

/* Highlight frames */
.callout { position: absolute; z-index: 3; border: 5px solid #ec3237; pointer-events: none; }
.callout-menu { top: 5px; left: 249px; width: 50px; height: 26px; }
.callout-item { top: 137px; left: 235px; width: 185px; height: 26px; }
```
